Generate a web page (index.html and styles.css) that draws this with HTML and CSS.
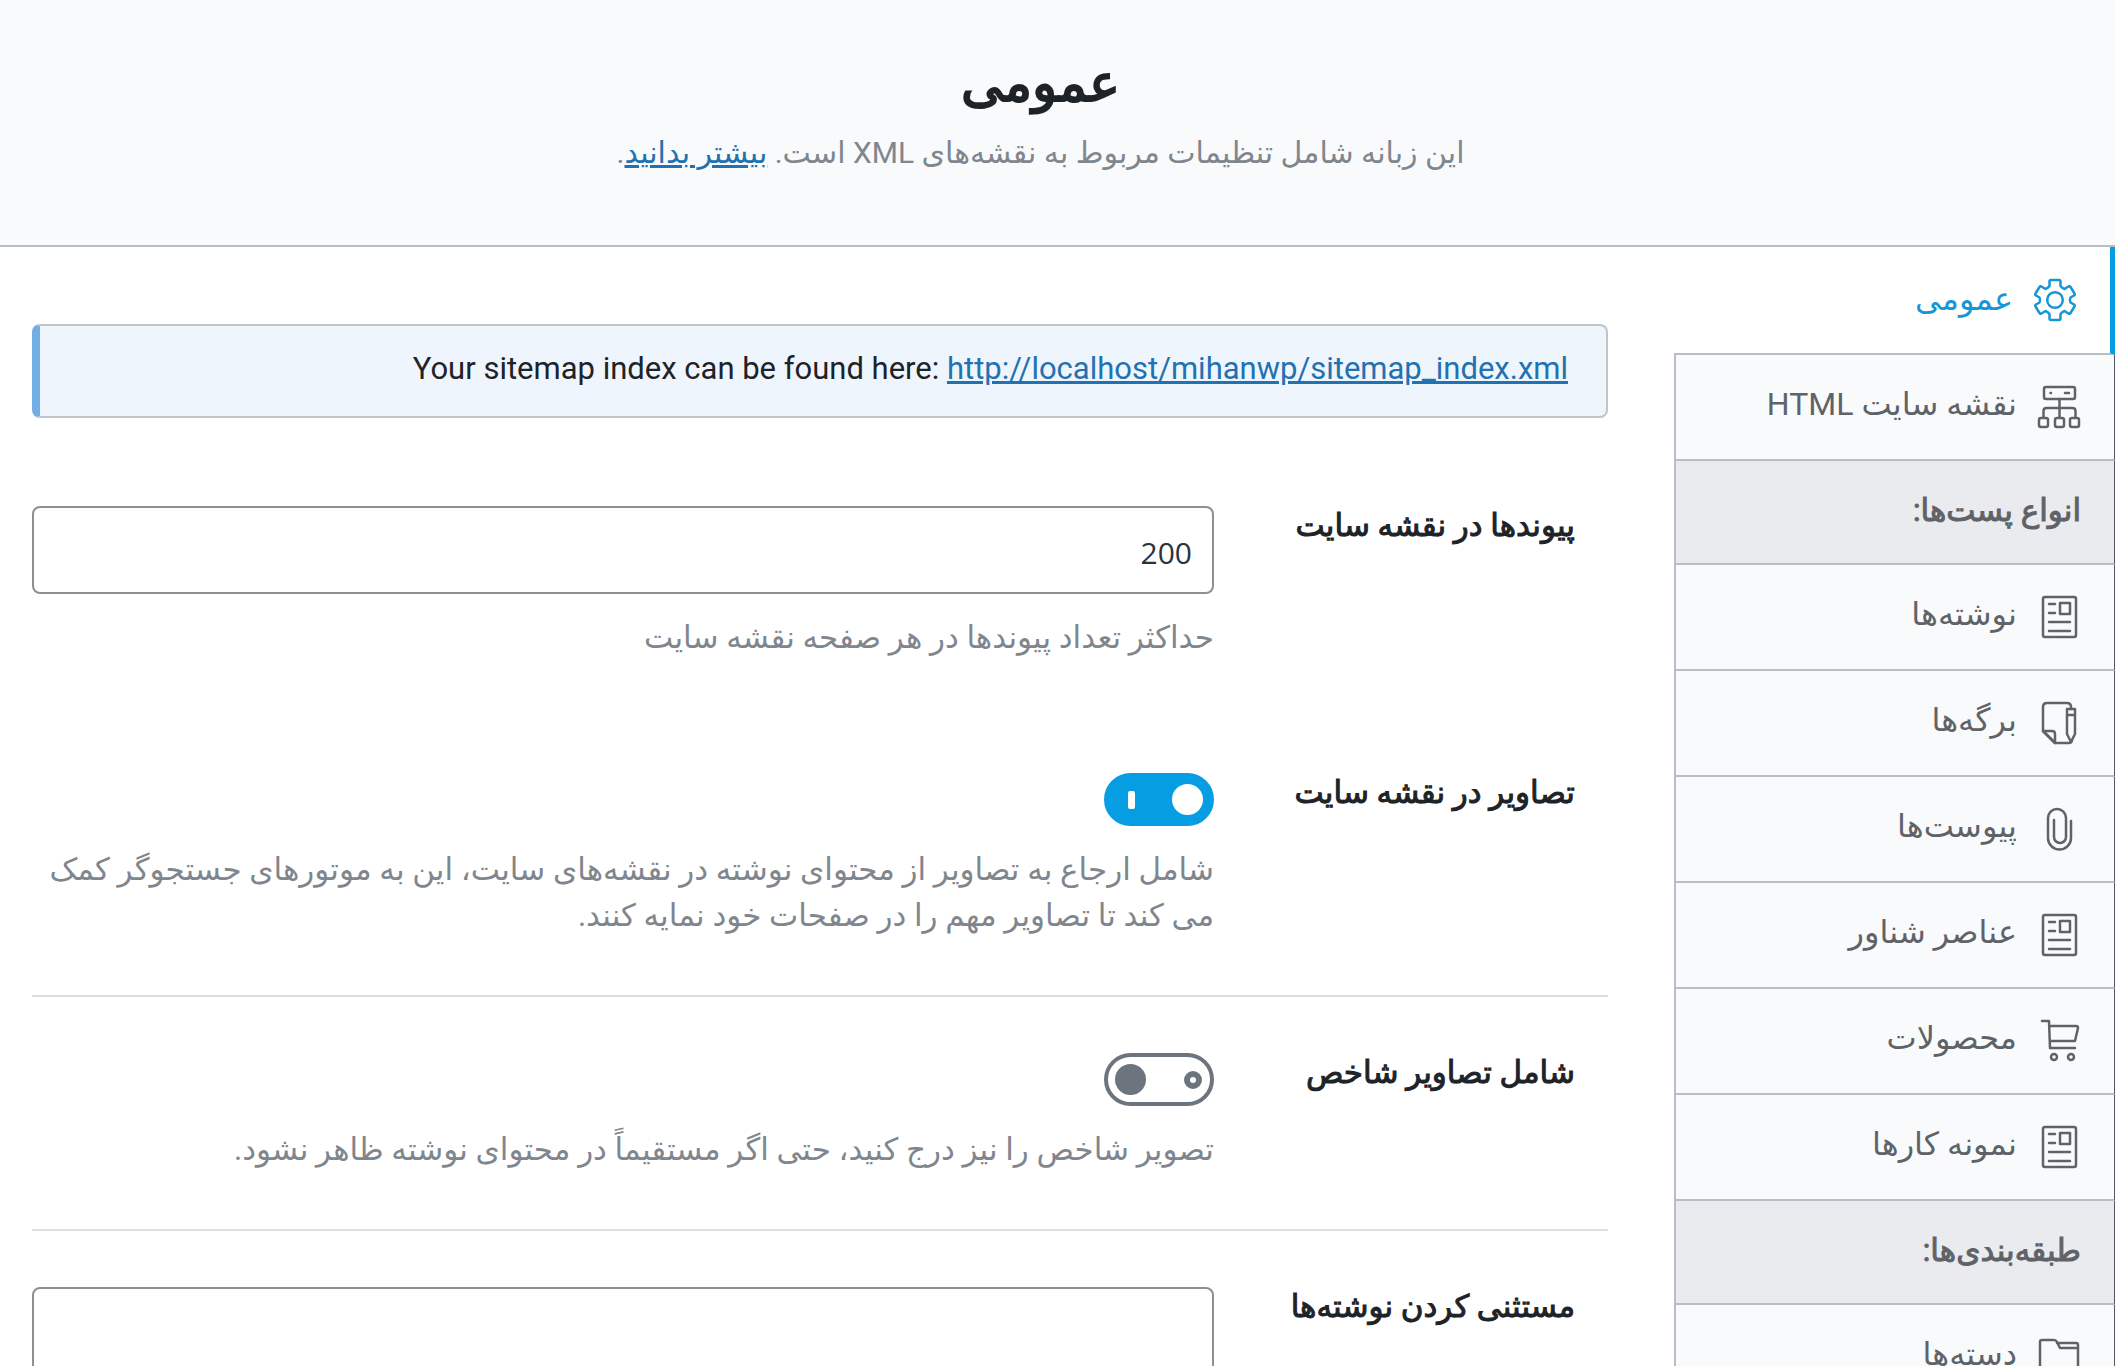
FILE: index.html
```html
<!DOCTYPE html>
<html lang="fa" dir="rtl">
<head>
    <meta charset="UTF-8">
    <meta name="viewport" content="width=device-width, initial-scale=1.0">
    <title>نقشه سایت</title>
    <link rel="stylesheet" href="styles.css">
</head>
<body>
    <svg class="sprite" width="0" height="0" aria-hidden="true">
        <symbol id="icon-post" viewBox="0 0 44 44">
            <rect x="6" y="2" width="33" height="40" rx="2"/>
            <rect x="23" y="8" width="10" height="11"/>
            <path d="M12 9h6M12 18h6M12 27h21M12 36h21"/>
        </symbol>
    </svg>

    <header class="header">
        <h1>عمومی</h1>
        <p>این زبانه شامل تنظیمات مربوط به نقشه‌های XML است. <a href="#">بیشتر بدانید</a>.</p>
    </header>

    <div class="wrapper">
        <nav class="tabs">
            <a class="tab active" href="#">
                <svg class="icon" viewBox="0 0 44 44">
                    <path d="M16.500 8V3.500q0-1.500 1.500-1.500h8q1.500 0 1.500 1.500V8q1.500 2 4 3l4-2.500q1.300-.6 2 .5l4 6.500q.7 1.300-.5 2L37.500 19.500q-1.200 2.500 0 5l3.500 2q1.200.7.5 2l-4 6.500q-.7 1.100-2 .5L31.500 33q-2.500 1-4 3v4.500q0 1.500-1.500 1.500h-8q-1.500 0-1.500-1.500V36q-1.500-2-4-3l-4 2.500q-1.300.6-2-.5l-4-6.500q-.7-1.300.5-2l3.500-2q1.200-2.500 0-5l-3.500-2q-1.200-.7-.5-2L6.500 9q.7-1.100 2-.5l4 2.500q2.500-1 4-3z"/>
                    <circle cx="22" cy="22" r="7.800"/>
                </svg>
                <span>عمومی</span>
            </a>
            <a class="tab" href="#">
                <svg class="icon" viewBox="0 0 44 44">
                    <rect x="7" y="2" width="31" height="12" rx="2"/>
                    <path d="M13.500 8h.5M28 8h4M22.500 14v18M6.500 32v-6q0-3 3-3h26q3 0 3 3v6"/>
                    <rect x="2" y="33" width="9" height="9" rx="2"/>
                    <rect x="18" y="33" width="9" height="9" rx="2"/>
                    <rect x="33" y="33" width="9" height="9" rx="2"/>
                </svg>
                <span>نقشه سایت HTML</span>
            </a>
            <h2 class="tab-title">انواع پست‌ها:</h2>
            <a class="tab" href="#">
                <svg class="icon"><use href="#icon-post"/></svg>
                <span>نوشته‌ها</span>
            </a>
            <a class="tab" href="#">
                <svg class="icon" viewBox="0 0 44 44">
                    <path d="M34 8V6q0-4-4-4H10Q6 2 6 6v24l12 12h14q2 0 3-2"/>
                    <path d="M6 30h9q3 0 3 3v9M18 42L6 30"/>
                    <path d="M30 8h8v25l-4 8-4-8zM30 14h8"/>
                </svg>
                <span>برگه‌ها</span>
            </a>
            <a class="tab" href="#">
                <svg class="icon" viewBox="0 0 44 44">
                    <path d="M34 14v17a11 11 0 0 1-23 0V11a9 9 0 0 1 18 0v19a6 6 0 0 1-12 0V13"/>
                </svg>
                <span>پیوست‌ها</span>
            </a>
            <a class="tab" href="#">
                <svg class="icon"><use href="#icon-post"/></svg>
                <span>عناصر شناور</span>
            </a>
            <a class="tab" href="#">
                <svg class="icon" viewBox="0 0 44 44">
                    <path d="M5 2h7l1 27h25M13 7h26q2 0 2 2l-3 13H13"/>
                    <circle cx="17" cy="38" r="3"/>
                    <circle cx="34" cy="38" r="3"/>
                </svg>
                <span>محصولات</span>
            </a>
            <a class="tab" href="#">
                <svg class="icon"><use href="#icon-post"/></svg>
                <span>نمونه کارها</span>
            </a>
            <h2 class="tab-title">طبقه‌بندی‌ها:</h2>
            <a class="tab" href="#">
                <svg class="icon" viewBox="0 0 44 44">
                    <path d="M3 38V7q0-2 2-2h12q2 0 3 2l3 6h18v25q0 2-2 2H5q-2 0-2-2zM20 8h19q2 0 2 2v3"/>
                </svg>
                <span>دسته‌ها</span>
            </a>
        </nav>

        <main class="content">
            <div class="notice">Your sitemap index can be found here: <a href="#">http://localhost/mihanwp/sitemap_index.xml</a></div>

            <div class="row no-border">
                <label for="links">پیوندها در نقشه سایت</label>
                <div class="field">
                    <input class="text" id="links" type="text" inputmode="numeric" value="200">
                    <p>حداکثر تعداد پیوندها در هر صفحه نقشه سایت</p>
                </div>
            </div>

            <div class="row">
                <label for="images">تصاویر در نقشه سایت</label>
                <div class="field">
                    <input class="toggle" id="images" type="checkbox" checked>
                    <p>شامل ارجاع به تصاویر از محتوای نوشته در نقشه‌های سایت، این به موتورهای جستجوگر کمک می کند تا تصاویر مهم را در صفحات خود نمایه کنند.</p>
                </div>
            </div>

            <div class="row">
                <label for="featured">شامل تصاویر شاخص</label>
                <div class="field">
                    <input class="toggle" id="featured" type="checkbox">
                    <p>تصویر شاخص را نیز درج کنید، حتی اگر مستقیماً در محتوای نوشته ظاهر نشود.</p>
                </div>
            </div>

            <div class="row">
                <label for="exclude">مستثنی کردن نوشته‌ها</label>
                <div class="field">
                    <input class="text" id="exclude" type="text">
                </div>
            </div>
        </main>
    </div>
</body>
</html>
```
FILE: styles.css
```css
*, *::before, *::after {
    box-sizing: border-box;
}

body {
    margin: 0;
    height: 100vh;
    overflow: hidden;
    display: flex;
    flex-direction: column;
    background: #fff;
    color: #1d2327;
    font-family: Roboto, "DejaVu Sans", sans-serif;
    font-size: 31px;
    line-height: 46px;
}

h1, h2, p {
    margin: 0;
    font-weight: normal;
}

a {
    color: #2271b1;
}

.sprite {
    position: absolute;
}

.header {
    flex: none;
    padding: 46px 34px 69px 0;
    text-align: center;
    background: #f8fafc;
    border-bottom: 2px solid #b8bec4;
}

.header h1 {
    margin-bottom: 8px;
    font-size: 52px;
    line-height: 76px;
    -webkit-text-stroke: 2px;
}

.header p {
    font-size: 30px;
    color: #7f868d;
}

.wrapper {
    flex: 1;
    min-height: 0;
    display: flex;
    align-items: flex-start;
}

/* tabs */
.tabs {
    flex: none;
    width: 441px;
    font-size: 32px;
}

.tab, .tab-title {
    display: flex;
    align-items: center;
    gap: 20px;
    height: 106px;
    padding: 0 33px;
    border: solid #b8bec4;
    border-width: 0 1px 2px 2px;
    border-right-color: #50575e;
    background: #f8fafc;
    color: #5f6368;
    text-decoration: none;
}

.tab span {
    padding-bottom: 6px;
}

.tab.active {
    height: 108px;
    border-right: 5px solid #069de3;
    border-left: 0;
    background: #fff;
    color: #1596d7;
}

.tab.active span {
    padding-bottom: 2px;
}

.tab-title {
    height: 104px;
    padding-bottom: 2px;
    background: #e9ebef;
    font-size: 31px;
    -webkit-text-stroke: 1px;
}

.icon {
    flex: none;
    width: 44px;
    height: 44px;
    fill: none;
    stroke: currentColor;
    stroke-width: 2.5;
    stroke-linecap: round;
    stroke-linejoin: round;
}

/* settings */
.content {
    flex: 1;
    padding: 77px 66px 0 32px;
}

.notice {
    margin-bottom: 32px;
    padding: 20px 38px 24px;
    border: 2px solid #c3c4c7;
    border-left: 8px solid #72aee6;
    border-radius: 8px;
    background: #eff5fd;
}

.row {
    display: flex;
    padding: 56px 0;
    border-bottom: 2px solid #dcdee1;
}

.row.no-border {
    border-bottom: 0;
}

.row label {
    width: 25%;
    padding-right: 33px;
    font-size: 31px;
    line-height: 40px;
    -webkit-text-stroke: 1px;
}

.field {
    width: 75%;
}

.field p {
    margin-top: 21px;
    color: #7f868d;
}

.text {
    display: block;
    width: 100%;
    height: 88px;
    padding: 4px 20px 0;
    border: 2px solid #8c8f94;
    border-radius: 8px;
    background: #fff;
    color: #2c3338;
    font-family: "Open Sans", sans-serif;
    font-size: 30px;
}

.toggle {
    appearance: none;
    display: flex;
    align-items: center;
    justify-content: space-between;
    width: 110px;
    height: 53px;
    margin: 0;
    padding: 0 8px 0 7px;
    border: 4px solid #6c757d;
    border-radius: 27px;
    background: #fff;
}

.toggle::before {
    content: "";
    width: 18px;
    height: 18px;
    border: 6px solid #6c757d;
    border-radius: 50%;
}

.toggle::after {
    content: "";
    width: 31px;
    height: 31px;
    border-radius: 50%;
    background: #6c757d;
}

.toggle:checked {
    flex-direction: row-reverse;
    padding: 0 7px 0 20px;
    border-color: #069de3;
    background: #069de3;
}

.toggle:checked::before {
    width: 7px;
    border: 0;
    border-radius: 2px;
    background: #fff;
}

.toggle:checked::after {
    background: #fff;
}
```
